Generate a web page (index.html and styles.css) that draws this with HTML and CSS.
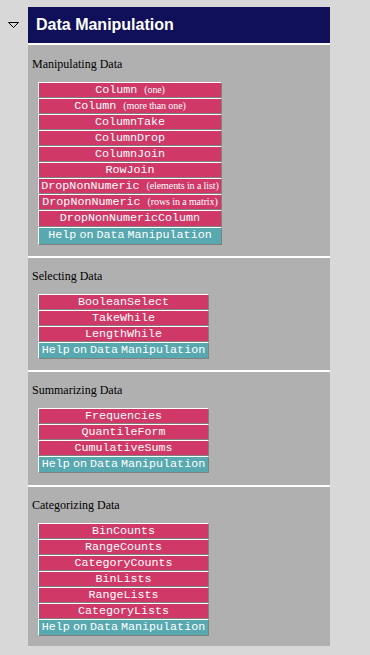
FILE: index.html
```html
<!DOCTYPE html>
<html>
<head>
<meta charset="utf-8">
<link rel="stylesheet" href="styles.css">
</head>
<body>
<div class="toggle">
  <svg width="12" height="7" viewBox="0 0 12 7"><polygon points="0.5,0.5 10.5,0.5 5.5,5.5" fill="none" stroke="#000" stroke-width="1"/></svg>
</div>
<div class="panel">
  <div class="header">Data Manipulation</div>

  <div class="section first">
    <div class="label">Manipulating Data</div>
    <div class="buttons wide">
      <div class="btn">Column <span class="note">(one)</span></div>
      <div class="btn">Column <span class="note">(more than one)</span></div>
      <div class="btn">ColumnTake</div>
      <div class="btn">ColumnDrop</div>
      <div class="btn">ColumnJoin</div>
      <div class="btn">RowJoin</div>
      <div class="btn">DropNonNumeric <span class="note">(elements in a list)</span></div>
      <div class="btn">DropNonNumeric <span class="note">(rows in a matrix)</span></div>
      <div class="btn tall">DropNonNumericColumn</div>
      <div class="btn help">Help on Data Manipulation</div>
    </div>
  </div>

  <div class="section">
    <div class="label">Selecting Data</div>
    <div class="buttons">
      <div class="btn">BooleanSelect</div>
      <div class="btn">TakeWhile</div>
      <div class="btn">LengthWhile</div>
      <div class="btn help">Help on Data Manipulation</div>
    </div>
  </div>

  <div class="section third">
    <div class="label">Summarizing Data</div>
    <div class="buttons">
      <div class="btn">Frequencies</div>
      <div class="btn">QuantileForm</div>
      <div class="btn">CumulativeSums</div>
      <div class="btn help">Help on Data Manipulation</div>
    </div>
  </div>

  <div class="section last">
    <div class="label">Categorizing Data</div>
    <div class="buttons">
      <div class="btn">BinCounts</div>
      <div class="btn">RangeCounts</div>
      <div class="btn">CategoryCounts</div>
      <div class="btn">BinLists</div>
      <div class="btn">RangeLists</div>
      <div class="btn">CategoryLists</div>
      <div class="btn help">Help on Data Manipulation</div>
    </div>
  </div>
</div>
</body>
</html>
```
FILE: styles.css
```css
html, body {
  margin: 0;
  padding: 0;
}
body {
  background: #d8d8d8;
  padding-top: 7px;
  display: flex;
  align-items: flex-start;
  font-family: "Liberation Serif", "Times New Roman", serif;
}
.toggle {
  width: 28px;
  flex: none;
}
.toggle svg {
  display: block;
  margin: 15px 0 0 8px;
}
.panel {
  width: 302px;
  background: #b0b0b0;
}
.header {
  height: 36px;
  background: #10105a;
  color: #ffffff;
  font-family: "Liberation Sans", Arial, sans-serif;
  font-weight: bold;
  font-size: 16px;
  display: flex;
  align-items: center;
  padding-left: 8px;
}
.section {
  border-top: 2px solid #ffffff;
  padding: 11px 0 11px 4px;
}
.section.first {
  padding-top: 12px;
}
.section.third {
  padding-bottom: 12px;
}
.section.last {
  padding-bottom: 10px;
}
.label {
  font-size: 12px;
  line-height: 14px;
  color: #000;
  margin-bottom: 11px;
}
.buttons {
  margin-left: 6px;
  width: 171px;
}
.buttons.wide {
  width: 184px;
}
.btn {
  box-sizing: border-box;
  height: 16px;
  border-top: 1px solid #ffffff;
  border-left: 1px solid #ffffff;
  border-right: 1px solid #808080;
  border-bottom: 1px solid #808080;
  background: #d03868;
  color: #ffffff;
  font-family: "Liberation Mono", "Courier New", monospace;
  font-size: 11.7px;
  line-height: 14px;
  text-align: center;
  white-space: nowrap;
}
.btn.tall {
  height: 17px;
}
.btn.help {
  height: 17px;
  line-height: 15px;
  background: #58a8b0;
  word-spacing: -4px;
}
.wide .btn.help {
  height: 18px;
}
.note {
  font-family: "Liberation Serif", "Times New Roman", serif;
  font-size: 10px;
  letter-spacing: -0.1px;
  word-spacing: 0;
}
```
